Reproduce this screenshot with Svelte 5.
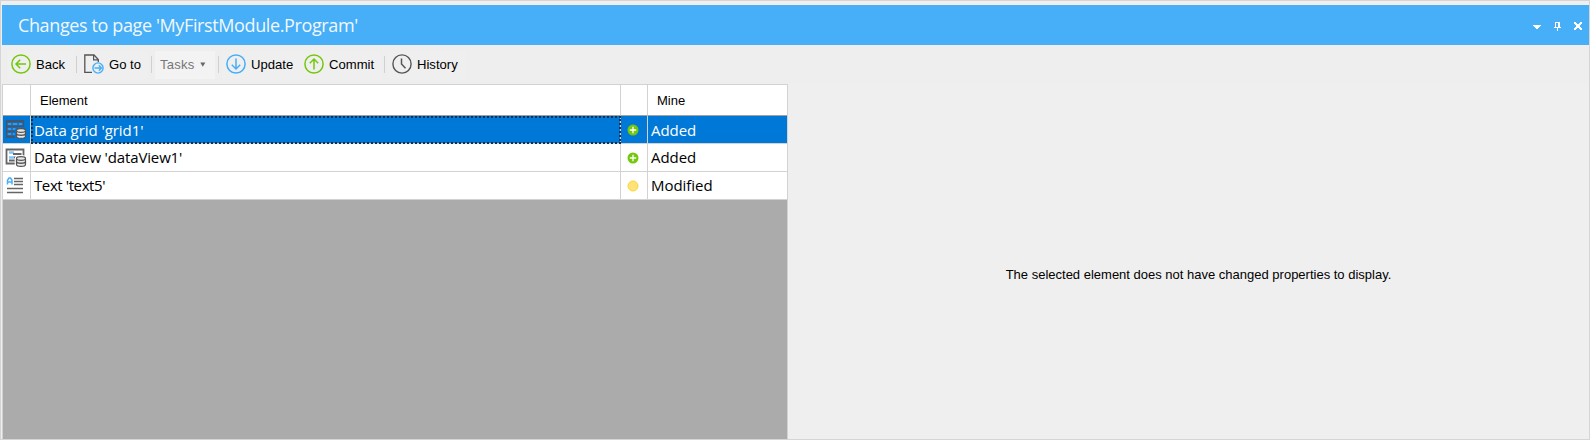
<script>
  const rows = [
    { icon: 'grid', name: "Data grid 'grid1'", status: 'Added', selected: true },
    { icon: 'view', name: "Data view 'dataView1'", status: 'Added' },
    { icon: 'text', name: "Text 'text5'", status: 'Modified' }
  ];
</script>

{#snippet database(fill)}
  <path d="M11 11.500v6c0 1.200 2.200 2 5 2s5-.8 5-2v-6c0-3-10-3-10 0z" fill="#555" stroke={fill} stroke-width="2.600" />
  <path d="M11.500 11.500v6c0 1.100 2 1.900 4.500 1.900s4.500-.8 4.500-1.900v-6" fill="#e8e8e8" stroke="#555" stroke-width="1.200" />
  <ellipse cx="16" cy="11.500" rx="4.500" ry="1.800" fill="#e8e8e8" stroke="#555" stroke-width="1.200" />
  <path d="M11.500 14.500c0 2.400 9 2.400 9 0" fill="none" stroke="#555" stroke-width="1.400" />
{/snippet}

<div class="window">
  <header>
    <h1>Changes to page 'MyFirstModule.Program'</h1>
    <svg class="controls" width="56" height="14" viewBox="0 0 56 14" shape-rendering="crispEdges">
      <path d="M1 5h8v1H8v1H7v1H6v1H4V8H3V7H2V6H1z" fill="#fff" />
      <path d="M23 2h5v5h1v1h-3v3h-1V8h-3V7h1zM24 3v4h2V3z" fill="#fff" fill-rule="evenodd" />
      <path d="M42 2h2v1h1v1h2V3h1V2h2v2h-1v1h-1v2h1v1h1v2h-2V9h-1V8h-2v1h-1v1h-2V8h1V7h1V5h-1V4h-1z" fill="#fff" />
    </svg>
  </header>

  <nav>
    <button class="back">
      <svg width="20" height="20" viewBox="0 0 20 20" fill="none" stroke="#74c80c" stroke-width="1.5"><circle cx="10" cy="10" r="9.1" /><path d="M15 10H5M9.2 5.8L5 10l4.200 4.200" /></svg>
      <span>Back</span>
    </button>
    <i></i>
    <button class="goto">
      <svg width="20" height="20" viewBox="0 0 20 20" fill="none"><path d="M8 18.300H.8V1H10l4.300 4.500V8" stroke="#555" stroke-width="1.3" /><path d="M9.600 1v4.900h4.700" stroke="#555" stroke-width="1.2" /><circle cx="14" cy="14" r="5.100" stroke="#47aef8" stroke-width="1.400" /><path d="M10.500 14h7M14.800 11.300l2.700 2.700-2.700 2.700" stroke="#47aef8" stroke-width="1.400" /></svg>
      <span>Go to</span>
    </button>
    <i></i>
    <button class="tasks" disabled><span>Tasks</span><svg width="6" height="5" viewBox="0 0 6 5"><path d="M.3.500h5L2.800 4.700z" fill="#666" /></svg></button>
    <i></i>
    <button class="update">
      <svg width="20" height="20" viewBox="0 0 20 20" fill="none" stroke="#47aef8" stroke-width="1.5"><circle cx="10" cy="10" r="9.1" /><path d="M10 4.500v10.500M5.800 10.800L10 15l4.200-4.200" /></svg>
      <span>Update</span>
    </button>
    <button class="commit">
      <svg width="20" height="20" viewBox="0 0 20 20" fill="none" stroke="#74c80c" stroke-width="1.5"><circle cx="10" cy="10" r="9.1" /><path d="M10 15.500V5M5.800 9.200L10 5l4.200 4.200" /></svg>
      <span>Commit</span>
    </button>
    <i></i>
    <button class="history">
      <svg width="20" height="20" viewBox="0 0 20 20" fill="none" stroke="#555" stroke-width="1.4"><circle cx="10" cy="10" r="9.1" /><path d="M9.500 4.500V10l4 4.300" stroke-width="1.500" /></svg>
      <span>History</span>
    </button>
  </nav>

  <main>
    <section class="list">
      <div class="row head"><div></div><div>Element</div><div></div><div>Mine</div></div>
      {#each rows as row}
        <div class="row {row.icon}" class:selected={row.selected}>
          <div class="icon">
            <svg width="22" height="22" viewBox="0 0 22 22">
              {#if row.icon === 'grid'}
                <path d="M1.500 2h17v16h-17z" fill="#1c78c4" stroke="#44546a" stroke-width="1.300" />
                <path d="M1.500 2.500h17M1.500 7.500h17M1.500 12.500h10M1.500 17.500h10" stroke="#44546a" stroke-width="2" />
                <path d="M3 5h3m2 0h4m2 0h3M3 10h3m2 0h4m2 0h3M3 15h3m2 0h3" stroke="#2e9bf0" stroke-width="2" />
                {@render database('#0078d7')}
              {:else if row.icon === 'view'}
                <path d="M1.500 2.500h17v14h-17z" fill="#fff" stroke="#666" stroke-width="1.800" />
                <path d="M4 5.500h5M4 10.500h5" stroke="#82c5f5" stroke-width="2.400" />
                <path d="M8 7h8.500M9 10.500h3M4 13.500h8" stroke="#666" stroke-width="2" />
                {@render database('#fff')}
              {:else}
                <path d="M2.500 9.500V5.300L4 3h1.500L7 5.300v4.200M2.500 7H7" fill="none" stroke="#47aef8" stroke-width="1.500" />
                <path d="M9 3.500h9M9 6.500h9M9 9.500h9M2 13.500h16M2 17.500h16" stroke="#666" stroke-width="1.400" />
              {/if}
            </svg>
          </div>
          <div class="name">{row.name}</div>
          <div class="mark">
            <svg width="12" height="12" viewBox="0 0 12 12">
              {#if row.status === 'Added'}
                <circle cx="6" cy="6" r="5.500" fill="#74c80c" /><path d="M6 2.800v6.400M2.800 6h6.400" stroke="#fff" stroke-width="1.300" />
              {:else}
                <circle cx="6" cy="6" r="5" fill="#ffe377" stroke="#fdd43b" />
              {/if}
            </svg>
          </div>
          <div class="status">{row.status}</div>
        </div>
      {/each}
    </section>
    <section class="details"><p>The selected element does not have changed properties to display.</p></section>
  </main>
</div>

<style>
  :global(body) { margin: 0; }
  * { box-sizing: border-box; }
  .window { width: 1590px; height: 440px; display: flex; flex-direction: column; padding: 4px 0 0 1px; border: 1px solid #d5d5d5; background: #efefef; font: 13.1px "Liberation Sans", Arial, sans-serif; color: #000; overflow: hidden; }
  header { height: 40px; flex: none; display: flex; align-items: center; justify-content: space-between; padding: 0 1px 0 16px; background: #47aef8; }
  h1 { margin: 0; font: 400 18px/24px "Open Sans", sans-serif; letter-spacing: -.38px; color: #fff; opacity: .93; white-space: nowrap; }
  .controls { margin-top: 3px; }
  nav { height: 39px; flex: none; display: flex; align-items: flex-start; padding: 6px 0 0 6px; background: #eee; }
  button { display: flex; align-items: center; height: 28px; border: 0; padding: 0 0 2px 4px; background: #efefef; font: inherit; color: #000; white-space: nowrap; }
  button svg { flex: none; }
  button span { margin-left: 5px; }
  .back { width: 65px; padding-left: 3px; }
  .goto { width: 68px; }
  .tasks { width: 60px; padding-left: 5px; background: #f3f3f3; color: #777; letter-spacing: .2px; }
  .tasks span { margin-left: 0; }
  .tasks svg { margin-left: 6px; }
  .update { width: 78px; }
  .commit { width: 81px; padding-left: 4px; }
  .history { width: 78px; padding-left: 4px; }
  nav i { width: 1px; height: 17px; margin: 5px 3px 0 3px; background: #d0d0d0; }
  main { flex: 1; min-height: 0; display: flex; }
  .list { width: 786px; border: solid #d2d2d2; border-width: 1px 1px 0 1px; background: #ababab; }
  .row { display: grid; grid-template-columns: 28px 590px 27px 139px; grid-template-rows: 100%; height: 28px; background: #fff; font: 15px/24px "Open Sans", sans-serif; }
  .row > div { border-right: 1px solid #d2d2d2; border-bottom: 1px solid #d2d2d2; display: flex; align-items: center; white-space: nowrap; }
  .row.head { height: 31px; font: 13px "Liberation Sans", Arial, sans-serif; }
  .row.head > div { padding-left: 9px; border-bottom-color: #a0a0a0; }
  .row > div:last-child { border-right: 0; }
  .selected { color: #fff; }
  .selected > div { background: #0078d7; }
  .row > .name, .row > .status { padding-left: 3px; letter-spacing: -.05px; }
  .view > .name, .view > .status, .text > .name, .text > .status { padding-bottom: 2px; }
  .view > .name { letter-spacing: -.14px; }
  .text > .name { letter-spacing: -.4px; }
  .selected .name { outline: 2px dotted #12304c; outline-offset: -2px; }
  .icon { padding-left: 2px; }
  .mark { padding: 0 0 0 6px; }
  .details { flex: 1; display: flex; justify-content: center; padding: 183px 0 0 20px; }
  p { margin: 0; white-space: nowrap; font-size: 13px; line-height: 16px; }
</style>
